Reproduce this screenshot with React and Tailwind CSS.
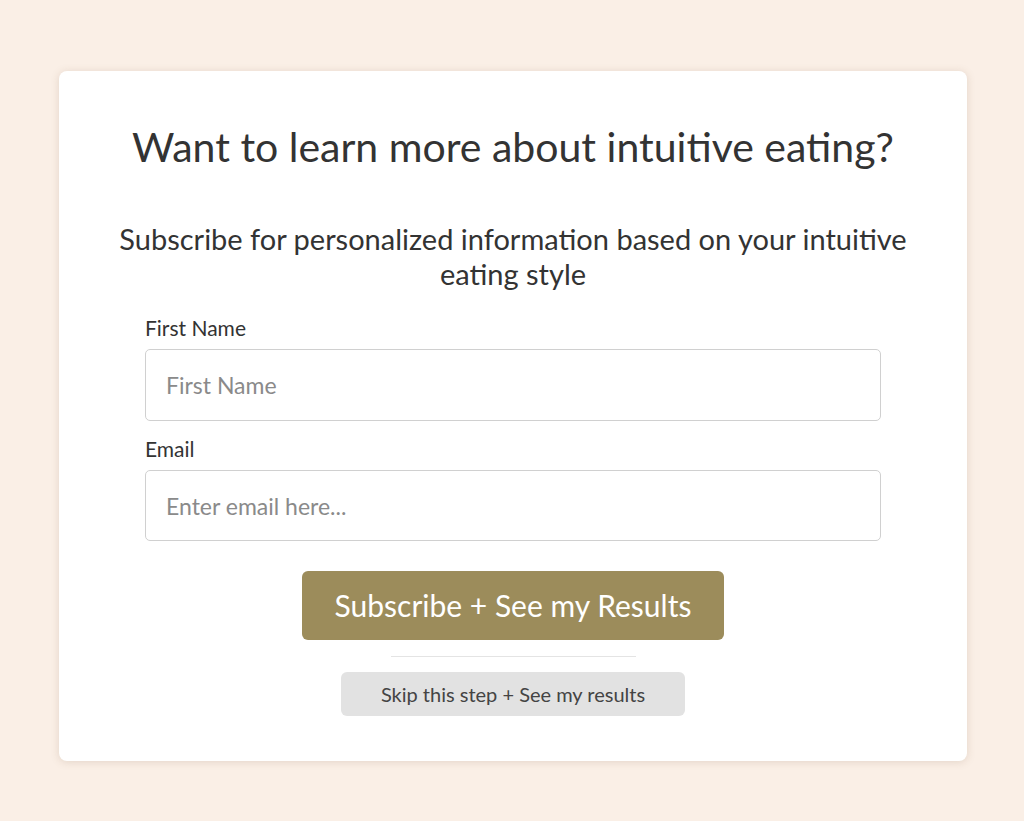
export default function App() {
  return (
    <div
      className="min-h-[821px] bg-[#faefe6] pl-[59px] pt-[71px] pb-[60px]"
      style={{ fontFamily: '"Lato", "Open Sans", sans-serif' }}
    >
      <div className="flex w-[908px] flex-col items-center rounded-lg bg-white px-[20px] pt-[48px] pb-[45px] shadow-[0_1px_8px_rgba(120,90,60,0.18)]">
        <h1 className="whitespace-nowrap text-center text-[41px] leading-[56px] text-[#333333]">
          Want to learn more about intuitive eating?
        </h1>
        <p className="mt-[46px] w-[800px] text-center text-[29px] leading-[35px] text-[#333333]">
          Subscribe for personalized information based on your intuitive eating style
        </p>

        <form className="mt-[24px] flex w-[736px] flex-col" onSubmit={(e) => e.preventDefault()}>
          <label className="mb-[8px] text-[21px] leading-[26px] text-[#333333]">First Name</label>
          <input
            type="text"
            placeholder="First Name"
            className="h-[72px] w-full rounded-[5px] border border-[#d0d0d0] px-[20px] text-[23px] text-[#333333] placeholder:text-[#8a8a8a] outline-none"
          />

          <label className="mt-[15px] mb-[8px] text-[21px] leading-[26px] text-[#333333]">Email</label>
          <input
            type="email"
            placeholder="Enter email here..."
            className="h-[71px] w-full rounded-[5px] border border-[#d0d0d0] px-[20px] text-[23px] text-[#333333] placeholder:text-[#8a8a8a] outline-none"
          />

          <div className="mt-[30px] flex flex-col items-center">
            <button
              type="submit"
              className="h-[69px] w-[422px] rounded-[6px] bg-[#9c8c5b] text-[30px] text-white"
            >
              Subscribe + See my Results
            </button>
            <div className="mt-[16px] h-px w-[245px] bg-[#e4e4e4]" />
            <button
              type="button"
              className="mt-[15px] h-[44px] w-[344px] rounded-[6px] bg-[#e2e2e2] text-[20px] text-[#444444]"
            >
              Skip this step + See my results
            </button>
          </div>
        </form>
      </div>
    </div>
  );
}
